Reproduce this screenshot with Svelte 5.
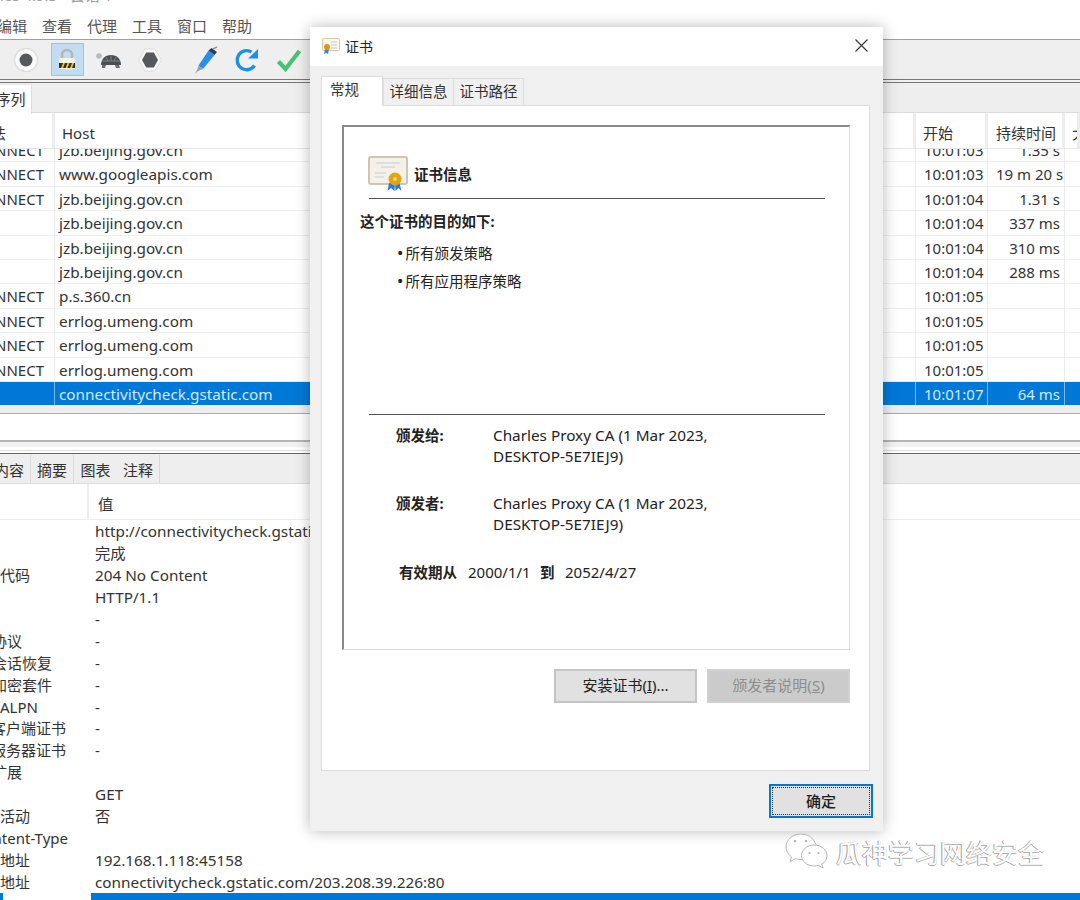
<script>
  const menu = ['编辑', '查看', '代理', '工具', '窗口', '帮助'];

  const rows = [
    { m: 'CONNECT', host: 'jzb.beijing.gov.cn', start: '10:01:03', dur: '1.35 s' },
    { m: 'CONNECT', host: 'www.googleapis.com', start: '10:01:03', dur: '19 m 20 s' },
    { m: 'CONNECT', host: 'jzb.beijing.gov.cn', start: '10:01:04', dur: '1.31 s' },
    { m: '', host: 'jzb.beijing.gov.cn', start: '10:01:04', dur: '337 ms' },
    { m: '', host: 'jzb.beijing.gov.cn', start: '10:01:04', dur: '310 ms' },
    { m: '', host: 'jzb.beijing.gov.cn', start: '10:01:04', dur: '288 ms' },
    { m: 'CONNECT', host: 'p.s.360.cn', start: '10:01:05', dur: '' },
    { m: 'CONNECT', host: 'errlog.umeng.com', start: '10:01:05', dur: '' },
    { m: 'CONNECT', host: 'errlog.umeng.com', start: '10:01:05', dur: '' },
    { m: 'CONNECT', host: 'errlog.umeng.com', start: '10:01:05', dur: '' },
    { m: '', host: 'connectivitycheck.gstatic.com', start: '10:01:07', dur: '64 ms', sel: true }
  ];

  // clip = how far the key sticks out past the left edge of the window
  const details = [
    { k: '', v: 'http://connectivitycheck.gstatic.com/generate_204' },
    { k: '', v: '完成' },
    { k: '代码', v: '204 No Content' },
    { k: '', v: 'HTTP/1.1' },
    { k: '', v: '-' },
    { k: '协议', v: '-', clip: 8 },
    { k: '会话恢复', v: '-', clip: 8 },
    { k: '加密套件', v: '-', clip: 8 },
    { k: 'ALPN', v: '-' },
    { k: '客户端证书', v: '-', clip: 9 },
    { k: '服务器证书', v: '-', clip: 9 },
    { k: '扩展', v: '', clip: 8 },
    { k: '', v: 'GET' },
    { k: '活动', v: '否' },
    { k: 'Content-Type', v: '', clip: 26 },
    { k: '地址', v: '192.168.1.118:45158' },
    { k: '地址', v: 'connectivitycheck.gstatic.com/203.208.39.226:80' }
  ];
</script>

<div class="app">
  <div class="titlebar"><span>les 4.9.3 - 会话 1</span></div>
  <div class="menubar">
    {#each menu as item}<span>{item}</span>{/each}
  </div>

  <div class="toolbar">
    <div class="tool">
      <svg width="26" height="26" viewBox="0 0 26 26"><circle cx="13" cy="13" r="11.5" fill="#fafafa" stroke="#dedede" stroke-width="1.5"/><circle cx="13" cy="13" r="6.5" fill="#55585c"/></svg>
    </div>
    <div class="tool active">
      <svg width="24" height="26" viewBox="0 0 24 26">
        <path d="M7 12V8a5 5 0 0 1 10 0v4" fill="none" stroke="#b4b4b4" stroke-width="2.4"/>
        <rect x="4" y="11" width="16" height="11" rx="1.500" fill="#f6f2e2"/>
        <rect x="4" y="16" width="16" height="5" fill="#2d2d2d"/>
        <path d="M6 21l2-5h2l-2 5zM10.500 21l2-5h2l-2 5zM15 21l2-5h2l-2 5z" fill="#f2c21c"/>
      </svg>
    </div>
    <div class="tool">
      <svg width="28" height="22" viewBox="0 0 28 22">
        <circle cx="4" cy="7" r="2.800" fill="#b9b9b9"/>
        <path d="M6 16c0-6 4-10 10-10s10 4 10 10z" fill="#4c4f52"/>
        <path d="M11 8l2 4M16 6.500v5M21 8l-2 4M7 12h18" stroke="#8e9092" stroke-width=".8"/>
        <path d="M7 16h4l-1 3H7zM20 16h4l1 3h-4z" fill="#6b6d70"/>
      </svg>
    </div>
    <div class="tool">
      <svg width="26" height="26" viewBox="0 0 26 26"><path d="M8 2h10l6.500 11L18 24H8L1.500 13z" fill="#f6f6f6" stroke="#dedede"/><path d="M9.200 5.500h7.600L21 13l-4.200 7.500H9.200L5 13z" fill="#55585c"/></svg>
    </div>
    <div class="tool pen">
      <svg width="26" height="28" viewBox="0 0 26 28">
        <path d="M15.500 4.500l6 4.500L10 23l-4.500-3.500z" fill="#2b8fe8"/>
        <path d="M15.500 4.500l3-2.500 5.500 4-2.500 3z" fill="#2b3e52"/>
        <path d="M20 3l4-2" stroke="#8b9aa8" stroke-width="1.500"/>
        <path d="M5.500 19.500L10 23l-5 2-3 3 2-4z" fill="#98a2ab"/>
      </svg>
    </div>
    <div class="tool">
      <svg width="26" height="26" viewBox="0 0 26 26"><path d="M20.500 18.500A9.500 9.500 0 1 1 17.500 5" fill="none" stroke="#1e8fe6" stroke-width="3.400"/><path d="M14 11.500h10V2z" fill="#1e8fe6"/></svg>
    </div>
    <div class="tool">
      <svg width="26" height="24" viewBox="0 0 26 24"><path d="M2.500 13.500l7 7.500L23.500 3" fill="none" stroke="#45c46f" stroke-width="4.200"/></svg>
    </div>
  </div>
  <div class="toolgap"></div>

  <div class="tabs top">
    <span class="tab on clipped">序列</span>
  </div>

  <div class="table">
    <div class="head row">
      <div class="c method"><span>方法</span></div>
      <div class="c host">Host</div>
      <div class="c start">开始</div>
      <div class="c dur">持续时间</div>
      <div class="c size">大</div>
    </div>
    <div class="rows">
      {#each rows as r}
        <div class="row" class:sel={r.sel}>
          <div class="c method"><span>{r.m}</span></div>
          <div class="c host">{r.host}</div>
          <div class="c start">{r.start}</div>
          <div class="c dur right">{r.dur}</div>
          <div class="c size"></div>
        </div>
      {/each}
    </div>
  </div>

  <div class="strip"></div>
  <div class="filter"></div>
  <div class="splitter"></div>
  <div class="sash"></div>
  <div class="sashline"></div>

  <div class="tabs bottom">
    <span class="tab clipped">内容</span>
    <span class="tab">摘要</span>
    <span class="tab plain">图表</span>
    <span class="tab">注释</span>
  </div>

  <div class="dhead">
    <div class="dkey"></div>
    <div class="dval">值</div>
  </div>
  <div class="dlist">
    {#each details as d}
      <div class="drow">
        <div class="dkey"><span style:margin-left="-{d.clip || 0}px">{d.k}</span></div>
        <div class="dval">{d.v}</div>
      </div>
    {/each}
    <div class="dsel"><i></i><b></b></div>
  </div>

  <div class="dialog">
    <div class="dtitle">
      <svg width="18" height="16" viewBox="0 0 18 16">
        <rect x=".5" y=".5" width="17" height="12" rx="1" fill="#fbf6ea" stroke="#d8c7a4"/>
        <path d="M9 4h6M9 7h6M9 10h6" stroke="#c9c9c9"/>
        <path d="M3 11l-1 5 2-1 2 1 1-5z" fill="#3f7fdc"/>
        <circle cx="5" cy="9" r="3" fill="#d99a12"/>
      </svg>
      <span>证书</span>
      <svg class="close" width="13" height="13" viewBox="0 0 13 13"><path d="M.5.500l12 12M12.500.5l-12 12" stroke="#333" stroke-width="1.100"/></svg>
    </div>

    <div class="dbody">
      <div class="dtabs">
        <span class="dtab on">常规</span>
        <span class="dtab">详细信息</span>
        <span class="dtab">证书路径</span>
      </div>

      <div class="panel">
        <div class="info">
          <div class="info-head">
            <svg width="40" height="36" viewBox="0 0 40 36">
              <rect x="1" y="1" width="38" height="27" rx="2" fill="#f5f1e8" stroke="#cfc5b0" stroke-width="2"/>
              <path d="M8 7h24M13 11h14M7 17h11M7 21h9" stroke="#c5cbd6"/>
              <path d="M21 27l-1.500 8 3.500-3 3.500 3 .5-8zM27 27l.5 8 3-3 3 3-2-8z" fill="#2f78dc"/>
              <circle cx="27" cy="23" r="6.500" fill="#e0a414"/>
              <circle cx="27" cy="23" r="2" fill="#f4d468"/>
            </svg>
            <strong>证书信息</strong>
          </div>
          <div class="rule"></div>
          <div class="purpose">这个证书的目的如下:</div>
          <ul>
            <li>所有颁发策略</li>
            <li>所有应用程序策略</li>
          </ul>
          <div class="rule low"></div>

          <div class="field first">
            <strong>颁发给:</strong>
            <span>Charles Proxy CA (1 Mar 2023,<br />DESKTOP-5E7IEJ9)</span>
          </div>
          <div class="field second">
            <strong>颁发者:</strong>
            <span>Charles Proxy CA (1 Mar 2023,<br />DESKTOP-5E7IEJ9)</span>
          </div>
          <div class="validity">
            <strong class="from">有效期从</strong>
            <span class="d1">2000/1/1</span>
            <strong class="to">到</strong>
            <span>2052/4/27</span>
          </div>
        </div>

        <div class="actions">
          <button><span>安装证书(<u>I</u>)...</span></button>
          <button class="off"><span>颁发者说明(<u>S</u>)</span></button>
        </div>
      </div>

      <div class="footer">
        <button class="ok"><span>确定</span></button>
      </div>
    </div>
  </div>

  <div class="mark">
    <svg width="44" height="38" viewBox="0 0 44 38">
      <g fill="#fff" stroke="#b5b5b5" stroke-width="1">
        <path d="M16 1C7.500 1 1 6.800 1 14c0 4 2 7.500 5.500 10l-1.500 4.500 5.500-2.800c2 .6 3.700.8 5.500.8 8.500 0 15-5.800 15-12.500S24.500 1 16 1z"/>
        <path d="M29 12c-7 0-12.500 4.700-12.500 10.500S22 33 29 33c1.500 0 3-.2 4.300-.7l4.700 2.700-1.200-4C40.500 29 42 26 42 22.500 42 16.700 36 12 29 12z"/>
      </g>
      <g fill="#b5b5b5"><circle cx="10" cy="8" r="1.300"/><circle cx="21" cy="8" r="1.300"/><circle cx="24.500" cy="20" r="1.100"/><circle cx="33.500" cy="20" r="1.100"/></g>
    </svg>
    <span>瓜神学习网络安全</span>
  </div>
</div>

<style>
  :global(body) {
    margin: 0;
    background: #fff;
  }

  .app {
    position: relative;
    width: 1080px;
    height: 900px;
    overflow: hidden;
    background: #fff;
    color: #333;
    font-family: "Noto Sans", "Noto Sans CJK SC", sans-serif;
    font-size: 15px;
  }

  .titlebar {
    height: 14px;
    overflow: hidden;
    color: #a0a0a0;
    line-height: 8px;
  }
  .titlebar span {
    display: block;
    margin-top: -9px;
  }

  .menubar {
    height: 25px;
    display: flex;
    align-items: center;
    gap: 15px;
    margin: 0 -3px;
    color: #555;
    line-height: 25px;
    border-bottom: 1px solid #a0a0a0;
  }

  .toolbar {
    height: 39px;
    display: flex;
    align-items: center;
    padding-left: 9px;
    background: #efefef;
    border-bottom: 1px solid #777;
  }
  .toolgap {
    height: 2px;
    background: #efefef;
  }
  .tool {
    width: 33px;
    height: 33px;
    margin-right: 8.500px;
    display: flex;
    align-items: center;
    justify-content: center;
    box-sizing: border-box;
    flex: none;
  }
  .tool.active {
    background: #c2dcf2;
    border: 1px solid #92c6ef;
  }
  .tool.pen {
    margin-left: 14px;
  }

  .tabs {
    display: flex;
    background: #eee;
    box-sizing: border-box;
  }
  .tabs.top {
    height: 31px;
    padding-top: 1px;
    border-top: 1px solid #777;
    border-bottom: 1px solid #ddd;
    position: relative;
    z-index: 1;
  }
  .tabs.bottom {
    height: 31px;
    padding-top: 1px;
    border-top: 1px solid #666;
    border-bottom: 1px solid #ddd;
  }
  .tab {
    width: 43px;
    flex: none;
    box-sizing: border-box;
    text-align: center;
    line-height: 31px;
    border-right: 1px solid #d8d8d8;
    color: #333;
  }
  .tab.plain {
    border-right: 0;
  }
  .tab.on {
    background: #fff;
    height: 30px;
    width: 42px;
    line-height: 28px;
    border-right: 1px solid #ddd;
    border-top: 1px solid #e8e8e8;
  }
  .tab.clipped {
    margin-left: -12px;
  }
  .tabs.top .tab.clipped {
    margin-left: -10px;
  }

  .row {
    display: grid;
    grid-template-columns: 55px 861px 72px 77px 15px;
    height: 24.4px;
    line-height: 24px;
    box-sizing: border-box;
    border-bottom: 1px solid #eee;
  }
  .head.row {
    height: 36px;
    line-height: 40px;
    background: #fff;
    border-bottom: 1px solid #e6e6e6;
  }
  .c {
    overflow: hidden;
    white-space: nowrap;
    border-right: 1px solid #ececec;
    box-sizing: border-box;
  }
  .head .c {
    border-right: 3px solid #ededed;
  }
  .method {
    display: flex;
    justify-content: flex-end;
    padding-right: 10px;
  }
  .head .method {
    justify-content: flex-start;
    padding-right: 0;
  }
  .head .method span {
    margin-left: -24px;
  }
  .host {
    padding-left: 4px;
    font-size: 15.300px;
  }
  .head .host {
    padding-left: 7px;
    font-size: 15px;
  }
  .start {
    padding-left: 8px;
  }
  .head .start {
    padding-left: 7px;
  }
  .dur {
    padding-left: 8px;
  }
  .right {
    text-align: right;
    padding-right: 4px;
  }
  .size {
    padding-left: 7px;
    border-right: 0;
  }
  .rows {
    height: 256px;
    overflow: hidden;
  }
  .rows .row:first-child {
    margin-top: -11px;
  }
  .row.sel {
    background: #0078d7;
    color: #d5e9f9;
    border-bottom-color: #0078d7;
  }
  .row.sel .c {
    border-right-color: #7db9e8;
  }

  .strip {
    height: 8px;
    background: #eee;
    border-bottom: 1px solid #aaa;
  }
  .filter {
    height: 26px;
    background: #fff;
  }
  .splitter {
    height: 2px;
    background: #b4b4b4;
  }
  .sash {
    height: 5px;
    background: #f2f2f2;
    margin-bottom: 3px;
  }
  .sashline {
    height: 1px;
    background: #ddd;
    margin-bottom: 2px;
  }

  .dhead {
    display: flex;
    height: 36px;
    line-height: 40px;
    border-bottom: 1px solid #eee;
    box-sizing: border-box;
  }
  .dhead .dkey {
    border-right: 2px solid #eee;
  }
  .dkey {
    width: 89px;
    flex: none;
    box-sizing: border-box;
    overflow: hidden;
    white-space: nowrap;
  }
  .dkey span {
    display: inline-block;
  }
  .dhead .dval {
    padding-left: 9px;
  }
  .dval {
    padding-left: 6px;
    white-space: nowrap;
    font-size: 15.300px;
  }
  .drow {
    display: flex;
    height: 21.940px;
    line-height: 22px;
  }
  .dsel {
    display: flex;
    justify-content: space-between;
    height: 8px;
  }
  .dsel i {
    width: 3px;
    background: #0078d7;
  }
  .dsel b {
    width: 989px;
    background: #0078d7;
  }

  /* the dialog floats over the main window */
  .dialog {
    position: absolute;
    z-index: 2;
    left: 310px;
    top: 27px;
    width: 573px;
    height: 804px;
    display: flex;
    flex-direction: column;
    background: #f0f0f0;
    box-shadow: 0 0 14px rgba(0, 0, 0, 0.28);
    color: #222;
    font-size: 14.500px;
  }
  .dtitle {
    height: 39px;
    flex: none;
    box-sizing: border-box;
    padding: 0 0 2px 12px;
    display: flex;
    align-items: center;
    gap: 5px;
    background: #fff;
    font-size: 14px;
  }
  .close {
    margin-left: auto;
    margin-right: 15px;
  }
  .dbody {
    flex: 1;
    padding: 10px 13px 0 11px;
    display: flex;
    flex-direction: column;
  }
  .dtabs {
    display: flex;
    height: 30px;
    align-items: flex-end;
    position: relative;
    z-index: 1;
    margin-bottom: -1px;
  }
  .dtab {
    width: 71px;
    height: 27px;
    line-height: 25px;
    box-sizing: border-box;
    text-align: center;
    border: 1px solid #ddd;
    border-bottom: 0;
    margin-bottom: 1px;
    margin-left: -1px;
    color: #333;
  }
  .dtab.on {
    width: 62px;
    height: 30px;
    line-height: 24px;
    padding-left: 8px;
    text-align: left;
    background: #fff;
    margin-left: 0;
    margin-bottom: 0;
    margin-right: 1px;
  }
  .panel {
    height: 666px;
    box-sizing: border-box;
    background: #fff;
    border: 1px solid #ddd;
    padding: 19px 19px 0 20px;
  }
  .info {
    height: 525px;
    box-sizing: border-box;
    border: 2px solid #8a8a8a;
    border-right: 1px solid #ddd;
    border-bottom: 1px solid #ddd;
    padding: 29px 24px 0 16px;
    line-height: 20px;
  }
  .info-head {
    display: flex;
    align-items: center;
    gap: 6px;
    padding-left: 8px;
    height: 36px;
    line-height: 18px;
  }
  .rule {
    height: 1px;
    background: #555;
    margin: 6px 0 0 9px;
  }
  .rule.low {
    margin-top: 116px;
  }
  .purpose {
    font-weight: 700;
    margin-top: 12px;
  }
  ul {
    list-style: none;
    margin: 11px 0 0;
    padding: 0 0 0 37px;
  }
  li {
    height: 28px;
    line-height: 22px;
  }
  li::before {
    content: "•";
    font-size: 17px;
    margin-right: 2px;
    line-height: 17px;
  }
  .field {
    display: flex;
    padding-left: 36px;
    margin-top: 11px;
    line-height: 21px;
  }
  .field strong {
    width: 97px;
    flex: none;
  }
  .field span {
    font-size: 15.300px;
  }
  .field.first {
    margin-top: 10px;
  }
  .field.second {
    margin-top: 26px;
  }
  .validity {
    display: flex;
    padding-left: 39px;
    margin-top: 27px;
    font-size: 15px;
  }
  .validity strong {
    font-size: 14.500px;
  }
  .from {
    width: 69px;
  }
  .d1 {
    width: 72px;
  }
  .to {
    width: 25px;
  }
  .actions {
    display: flex;
    justify-content: flex-end;
    gap: 10px;
    margin-top: 19px;
  }
  button {
    width: 143px;
    height: 34px;
    padding: 0 0 3px;
    box-sizing: border-box;
    background: #e1e1e1;
    border: 2px solid #c4c4c4;
    color: #222;
    font: inherit;
    font-size: 15px;
  }
  .off {
    background: #cbcbcb;
    border-color: #d0d0d0;
    color: #8e8e8e;
  }
  .footer {
    display: flex;
    justify-content: flex-end;
    margin: 13px -3px 0 0;
  }
  .ok {
    width: 104px;
    border: 2px solid #0078d7;
    padding: 1px;
    display: flex;
    font-weight: 500;
  }
  .ok span {
    flex: 1;
    line-height: 26px;
    border: 1px dotted #333;
  }

  .mark {
    position: absolute;
    z-index: 2;
    left: 785px;
    top: 833px;
    display: flex;
    align-items: center;
    gap: 7px;
    font-size: 26px;
    height: 38px;
    color: #fff;
    text-shadow: -1px 0 0 #9a9a9a, 0 1px 0 #b0b0b0;
  }
</style>
